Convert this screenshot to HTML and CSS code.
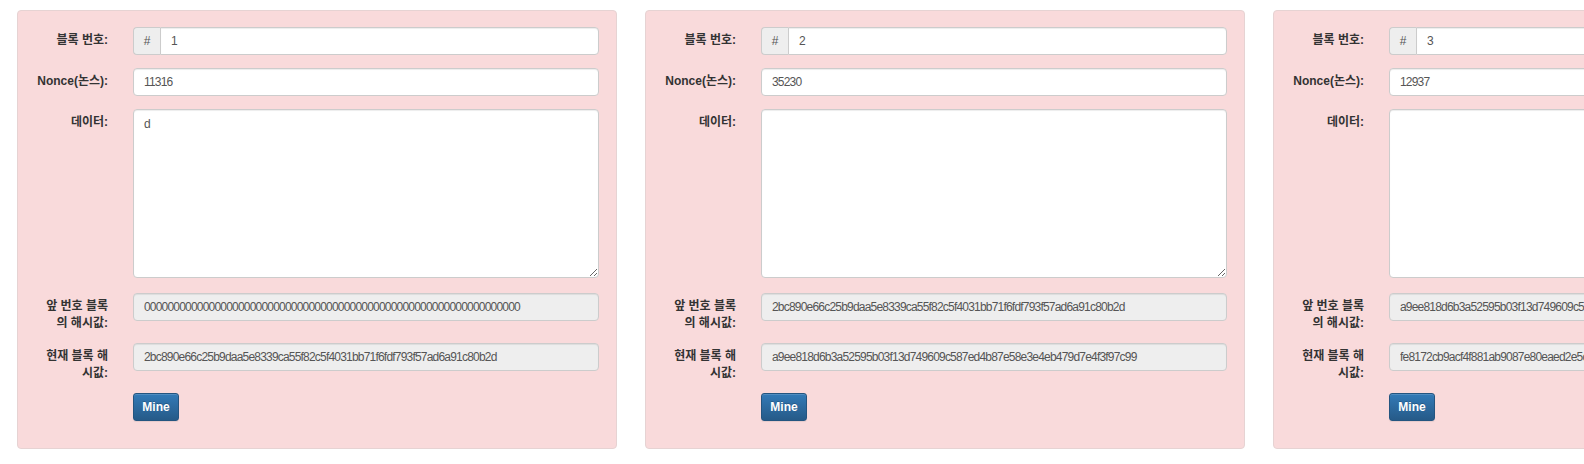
FILE: index.html
```html
<!DOCTYPE html>
<html lang="ko">
<head>
<meta charset="utf-8">
<title>Blockchain</title>
<link rel="stylesheet" href="styles.css">
</head>
<body>
<div class="row">
  <div class="card">
    <div class="field">
      <label class="lbl">블록 번호:</label>
      <div class="group"><span class="addon">#</span><input class="ctl grp" type="text" value="1"></div>
    </div>
    <div class="field">
      <label class="lbl">Nonce(논스):</label>
      <input class="ctl" type="text" value="11316">
    </div>
    <div class="field field-data">
      <label class="lbl">데이터:</label>
      <textarea class="ctl area">d</textarea>
    </div>
    <div class="field field-hash">
      <label class="lbl">앞 번호 블록<br>의 해시값:</label>
      <input class="ctl ro" type="text" readonly value="0000000000000000000000000000000000000000000000000000000000000000">
    </div>
    <div class="field field-hash">
      <label class="lbl">현재 블록 해<br>시값:</label>
      <input class="ctl ro" type="text" readonly value="2bc890e66c25b9daa5e8339ca55f82c5f4031bb71f6fdf793f57ad6a91c80b2d">
    </div>
    <div class="field field-last">
      <span class="lbl"></span>
      <button class="btn" type="button">Mine</button>
    </div>
  </div>

  <div class="card">
    <div class="field">
      <label class="lbl">블록 번호:</label>
      <div class="group"><span class="addon">#</span><input class="ctl grp" type="text" value="2"></div>
    </div>
    <div class="field">
      <label class="lbl">Nonce(논스):</label>
      <input class="ctl" type="text" value="35230">
    </div>
    <div class="field field-data">
      <label class="lbl">데이터:</label>
      <textarea class="ctl area"></textarea>
    </div>
    <div class="field field-hash">
      <label class="lbl">앞 번호 블록<br>의 해시값:</label>
      <input class="ctl ro" type="text" readonly value="2bc890e66c25b9daa5e8339ca55f82c5f4031bb71f6fdf793f57ad6a91c80b2d">
    </div>
    <div class="field field-hash">
      <label class="lbl">현재 블록 해<br>시값:</label>
      <input class="ctl ro" type="text" readonly value="a9ee818d6b3a52595b03f13d749609c587ed4b87e58e3e4eb479d7e4f3f97c99">
    </div>
    <div class="field field-last">
      <span class="lbl"></span>
      <button class="btn" type="button">Mine</button>
    </div>
  </div>

  <div class="card">
    <div class="field">
      <label class="lbl">블록 번호:</label>
      <div class="group"><span class="addon">#</span><input class="ctl grp" type="text" value="3"></div>
    </div>
    <div class="field">
      <label class="lbl">Nonce(논스):</label>
      <input class="ctl" type="text" value="12937">
    </div>
    <div class="field field-data">
      <label class="lbl">데이터:</label>
      <textarea class="ctl area"></textarea>
    </div>
    <div class="field field-hash">
      <label class="lbl">앞 번호 블록<br>의 해시값:</label>
      <input class="ctl ro" type="text" readonly value="a9ee818d6b3a52595b03f13d749609c587ed4b87e58e3e4eb479d7e4f3f97c99">
    </div>
    <div class="field field-hash">
      <label class="lbl">현재 블록 해<br>시값:</label>
      <input class="ctl ro" type="text" readonly value="fe8172cb9acf4f881ab9087e80eaed2e5c1a0b7d93f4e62a18c7d05b3e9f4a61">
    </div>
    <div class="field field-last">
      <span class="lbl"></span>
      <button class="btn" type="button">Mine</button>
    </div>
  </div>
</div>
</body>
</html>
```
FILE: styles.css
```css
html, body {
  margin: 0;
  padding: 0;
  background: #fff;
  overflow: hidden;
}

body {
  font-family: "Liberation Sans", "Noto Sans CJK KR", sans-serif;
  font-size: 12px;
  color: #333;
}

.row {
  display: flex;
  gap: 28px;
  padding: 10px 0 0 17px;
  width: max-content;
}

.card {
  flex: 0 0 600px;
  box-sizing: border-box;
  background: #f9dadb;
  border: 1px solid #e6d3d3;
  border-radius: 4px;
  padding: 16px 17px 27px 14px;
  display: flex;
  flex-direction: column;
}

.field {
  display: flex;
  align-items: flex-start;
  gap: 25px;
  margin-bottom: 13px;
}

.field-data {
  margin-bottom: 15px;
}

.field-hash {
  margin-bottom: 11px;
}

.field-last {
  margin-bottom: 0;
}

.lbl {
  flex: 0 0 76px;
  text-align: right;
  font-weight: bold;
  line-height: 17px;
  padding-top: 5px;
  white-space: nowrap;
  color: #333;
}

.field-last .lbl {
  padding-top: 0;
}

.ctl {
  box-sizing: border-box;
  width: 466px;
  height: 28px;
  margin: 0;
  padding: 0 10px;
  border: 1px solid #ccc;
  border-radius: 4px;
  background: #fff;
  box-shadow: inset 0 1px 1px rgba(0, 0, 0, .075);
  font-family: "Liberation Sans", sans-serif;
  font-size: 12px;
  letter-spacing: -0.8px;
  color: #555;
  outline: none;
}

.area {
  display: block;
  height: 169px;
  padding: 6px 10px;
  line-height: 17px;
  resize: vertical;
}

.ro {
  background: #eee;
}

.group {
  display: flex;
  width: 466px;
}

.addon {
  box-sizing: border-box;
  flex: 0 0 27px;
  height: 28px;
  display: flex;
  align-items: center;
  justify-content: center;
  background: #eee;
  border: 1px solid #ccc;
  border-right: 0;
  border-radius: 4px 0 0 4px;
  color: #555;
  font-size: 12px;
}

.grp {
  flex: 1 1 auto;
  width: auto;
  border-radius: 0 4px 4px 0;
}

.btn {
  box-sizing: border-box;
  width: 46px;
  height: 28px;
  margin: 0;
  padding: 0;
  border: 1px solid #245580;
  border-radius: 3px;
  background: linear-gradient(to bottom, #337ab7 0%, #265a88 100%);
  color: #fff;
  font-family: "Liberation Sans", sans-serif;
  font-size: 12px;
  font-weight: bold;
  text-shadow: 0 -1px 0 rgba(0, 0, 0, .2);
  box-shadow: inset 0 1px 0 rgba(255, 255, 255, .15), 0 1px 1px rgba(0, 0, 0, .075);
  cursor: pointer;
}
```
